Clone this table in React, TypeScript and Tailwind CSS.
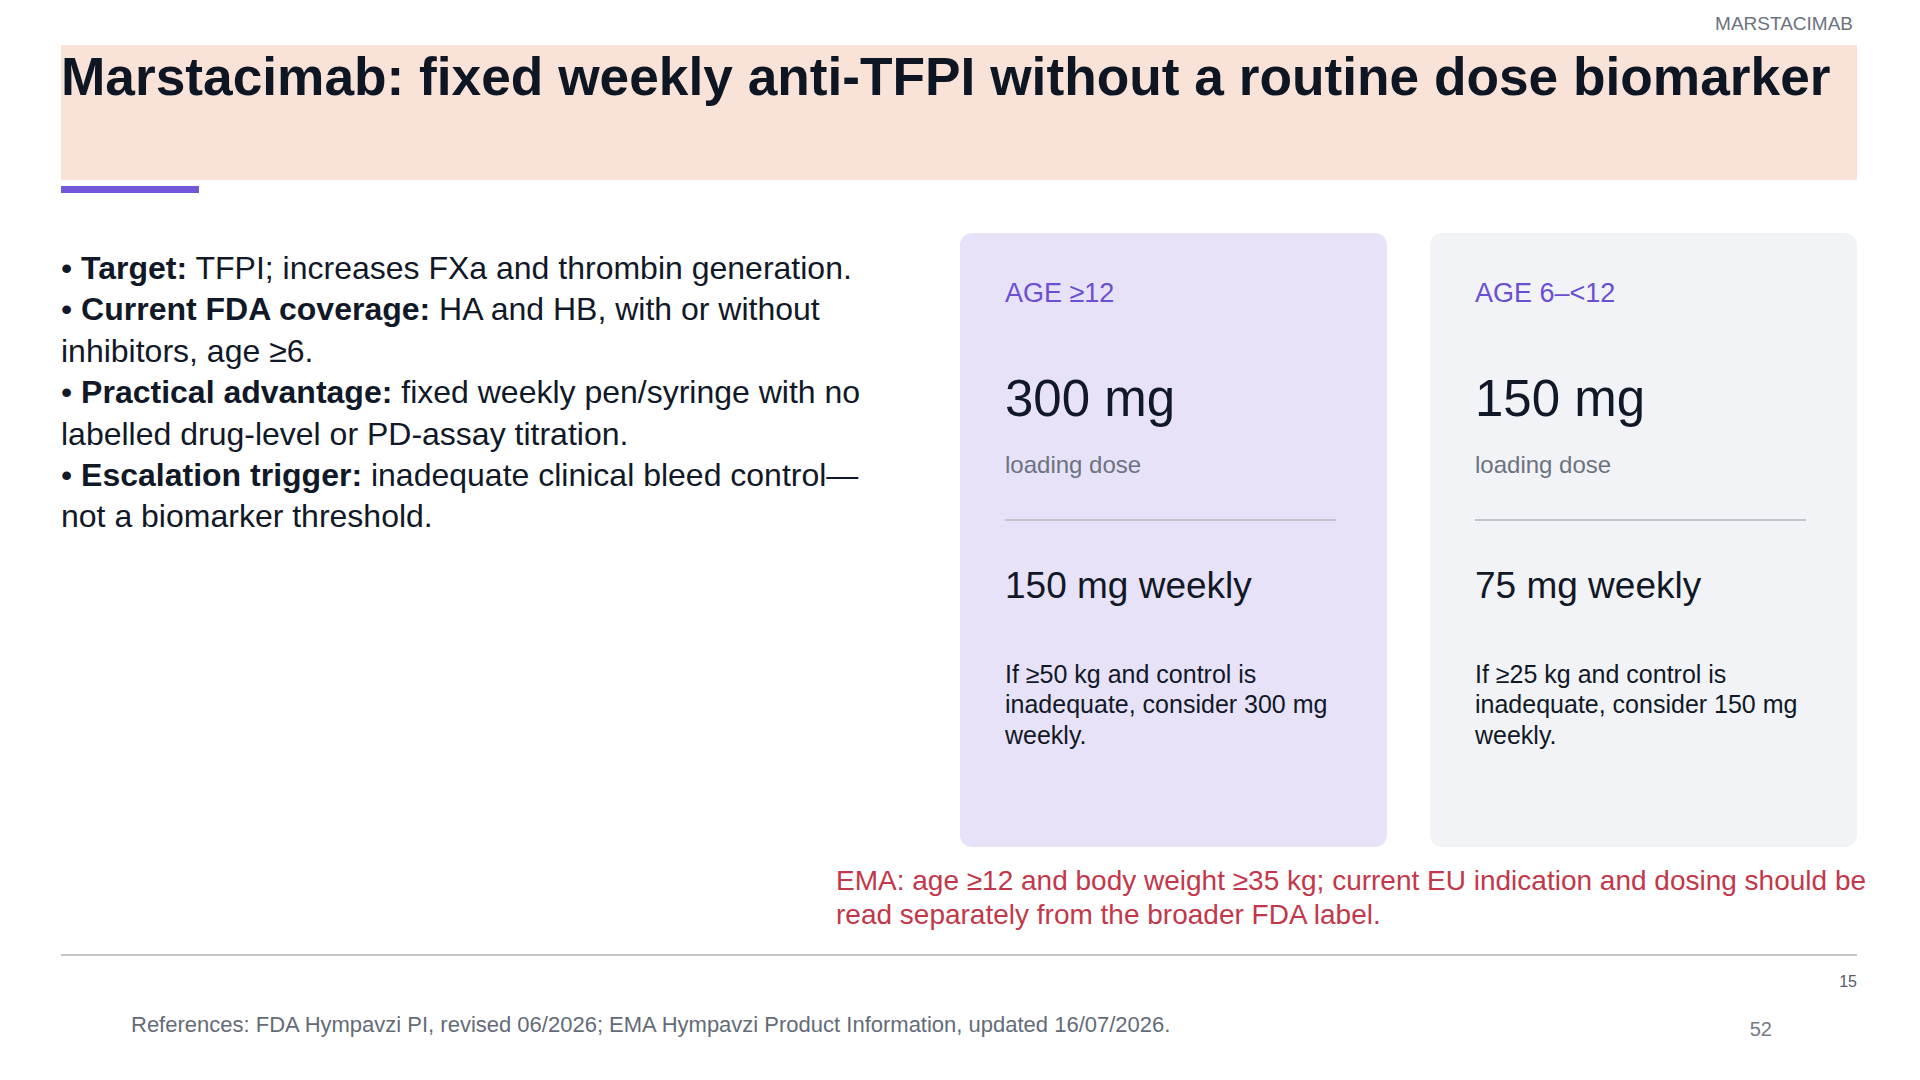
const font = { fontFamily: '"Liberation Sans", Arial, sans-serif' };

type Dose = {
  age: string;
  loading: string;
  weekly: string;
  note: string;
  tone: string;
};

const doses: Dose[] = [
  {
    age: 'AGE ≥12',
    loading: '300 mg',
    weekly: '150 mg weekly',
    note: 'If ≥50 kg and control is inadequate, consider 300 mg weekly.',
    tone: 'bg-[#e7e2f8]',
  },
  {
    age: 'AGE 6–<12',
    loading: '150 mg',
    weekly: '75 mg weekly',
    note: 'If ≥25 kg and control is inadequate, consider 150 mg weekly.',
    tone: 'bg-[#f2f3f6]',
  },
];

const bullets = [
  { label: 'Target:', text: 'TFPI; increases FXa and thrombin generation.' },
  { label: 'Current FDA coverage:', text: 'HA and HB, with or without inhibitors, age ≥6.' },
  { label: 'Practical advantage:', text: 'fixed weekly pen/syringe with no labelled drug-level or PD-assay titration.' },
  { label: 'Escalation trigger:', text: 'inadequate clinical bleed control—not a biomarker threshold.' },
];

function DoseCard({ dose }: { dose: Dose }) {
  return (
    <div className={`flex-1 rounded-[12px] ${dose.tone} pl-[45px] pr-[45px] pt-[44px]`}>
      <div className="text-[27px] leading-[1.2] text-[#6a4fd3]">{dose.age}</div>
      <div className="mt-[59px] text-[51px] leading-[1.2] text-[#111827]">{dose.loading}</div>
      <div className="mt-[21px] text-[24px] leading-[1.2] text-[#6b7280]">loading dose</div>
      <div className="mt-[40px] h-[2px] w-[331px] bg-[#c3c4cc]" />
      <div className="mt-[43px] text-[37px] leading-[1.2] text-[#111827]">{dose.weekly}</div>
      <div className="mt-[50px] text-[25px] leading-[30.7px] text-[#111827]">{dose.note}</div>
    </div>
  );
}

export default function App() {
  return (
    <div className="min-h-[1080px] w-[1920px] bg-white pl-[61px] pr-[63px] pt-[12px]" style={font}>
      {/* Top label */}
      <div className="pr-[4px] text-right text-[19px] leading-[23px] text-[#6b7280]">MARSTACIMAB</div>

      {/* Title band */}
      <div className="mt-[10px] h-[135px] bg-[#f9e3d9]">
        <h1 className="text-[53.25px] font-bold leading-[1.2] text-[#0f1623]">
          Marstacimab: fixed weekly anti-TFPI without a routine dose biomarker
        </h1>
      </div>
      <div className="mt-[6px] h-[7px] w-[138px] bg-[#7357d9]" />

      {/* Body */}
      <div className="mt-[40px] flex gap-[40px]">
        <div className="flex-1 pr-[30px] pt-[15px] text-[32px] leading-[41.4px] text-[#111827]">
          {bullets.map((b) => (
            <p key={b.label}>
              • <span className="font-bold">{b.label}</span> {b.text}
            </p>
          ))}
        </div>
        <div className="flex h-[614px] w-[897px] gap-[43px]">
          {doses.map((d) => (
            <DoseCard key={d.age} dose={d} />
          ))}
        </div>
      </div>

      <p className="ml-[775px] mt-[17px] w-[1050px] text-[28px] leading-[34px] text-[#c2384a]">
        EMA: age ≥12 and body weight ≥35 kg; current EU indication and dosing should be read separately from the broader FDA label.
      </p>

      {/* Footer */}
      <div className="mt-[22px] h-[2px] bg-[#c4c5cc]" />
      <div className="mt-[16px] text-right text-[16px] leading-[1.2] text-[#555b66]">15</div>
      <div className="mt-[21px] flex items-start justify-between pl-[70px] pr-[85px]">
        <span className="text-[22px] leading-[1.2] text-[#646b78]">
          References: FDA Hympavzi PI, revised 06/2026; EMA Hympavzi Product Information, updated 16/07/2026.
        </span>
        <span className="mt-[5px] text-[20px] leading-[1.2] text-[#777b84]">52</span>
      </div>
    </div>
  );
}
